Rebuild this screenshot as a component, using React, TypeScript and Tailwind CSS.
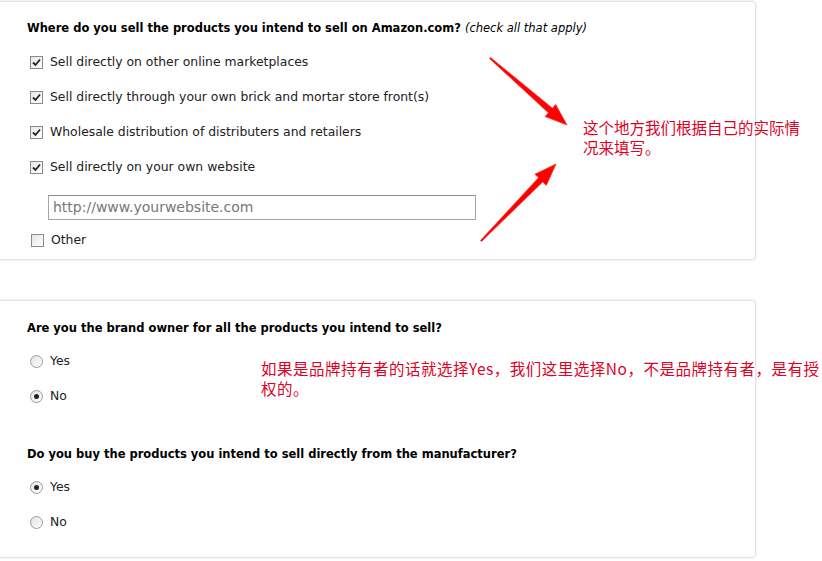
import type { ReactNode } from 'react';

// Seller questionnaire card with red hand-drawn annotations on top.

const FONT = "font-['DejaVu_Sans','Verdana',sans-serif]";

function CheckBox({ checked }: { checked: boolean }) {
  return (
    <span className="flex h-[13px] w-[13px] shrink-0 items-center justify-center border border-[#8a8a8a] bg-gradient-to-br from-[#e6e6e6] to-white">
      {checked && (
        <svg width="9" height="9" viewBox="0 0 9 9">
          <path d="M1 4.5 L3.5 7 L8 1.5" fill="none" stroke="#222" strokeWidth="1.8" />
        </svg>
      )}
    </span>
  );
}

function Radio({ checked }: { checked: boolean }) {
  return (
    <span className="flex h-[13px] w-[13px] shrink-0 items-center justify-center rounded-full border border-[#9a9a9a] bg-gradient-to-br from-[#e2e2e2] to-white">
      {checked && <span className="h-[5px] w-[5px] rounded-full bg-[#222]" />}
    </span>
  );
}

function Row({ control, children }: { control: ReactNode; children: ReactNode }) {
  return (
    <div className="flex h-[35px] items-center gap-[7px] pl-[3px] text-[12.4px] text-[#222]">
      {control}
      <span>{children}</span>
    </div>
  );
}

function Question({ children }: { children: ReactNode }) {
  return <div className="h-[16px] text-[11.5px] font-bold leading-[16px] text-black">{children}</div>;
}

export default function App() {
  return (
    <div className={`relative h-[561px] w-[822px] overflow-hidden bg-white ${FONT}`}>
      <div className="flex flex-col gap-[40px] pt-[1px]">
        {/* Box 1: sales channels */}
        <section className="-ml-[6px] flex w-[762px] flex-col rounded-[4px] border border-[#e2e2e2] pt-[18px] pb-[9px] pl-[32px] shadow-[0_0_0_1px_#f4f4f4]">
          <Question>
            Where do you sell the products you intend to sell on Amazon.com?{' '}
            <span className="font-normal italic">(check all that apply)</span>
          </Question>
          <div className="mt-[9px] flex flex-col">
            <Row control={<CheckBox checked />}>Sell directly on other online marketplaces</Row>
            <Row control={<CheckBox checked />}>Sell directly through your own brick and mortar store front(s)</Row>
            <Row control={<CheckBox checked />}>Wholesale distribution of distributers and retailers</Row>
            <Row control={<CheckBox checked />}>Sell directly on your own website</Row>
          </div>
          <div className="ml-[21px] mt-[10px] flex h-[25px] w-[428px] items-center border border-[#a5a5a5] border-t-[#8e8e8e] pl-[4px] text-[14px] text-[#777]">
            http://www.yourwebsite.com
          </div>
          <div className="mt-[10px] flex h-[20px] items-center gap-[7px] pl-[4px] text-[12.4px] text-[#222]">
            <CheckBox checked={false} />
            <span>Other</span>
          </div>
        </section>

        {/* Box 2: brand and sourcing */}
        <section className="-ml-[6px] flex w-[762px] flex-col rounded-[4px] border border-[#e2e2e2] pt-[19px] pb-[17px] pl-[32px] shadow-[0_0_0_1px_#f4f4f4]">
          <Question>Are you the brand owner for all the products you intend to sell?</Question>
          <div className="mt-[8px] flex flex-col">
            <Row control={<Radio checked={false} />}>Yes</Row>
            <Row control={<Radio checked />}>No</Row>
          </div>
          <div className="mt-[32px]">
            <Question>Do you buy the products you intend to sell directly from the manufacturer?</Question>
          </div>
          <div className="mt-[8px] flex flex-col">
            <Row control={<Radio checked />}>Yes</Row>
            <Row control={<Radio checked={false} />}>No</Row>
          </div>
        </section>
      </div>

      {/* Annotations */}
      <svg className="pointer-events-none absolute inset-0" width="822" height="561">
        <polygon
          points="489.5,58.5 548.4,112.8 545.1,116.5 567,125 555.7,104.5 552.4,108.2 490.5,57.5"
          fill="#ff0000"
          stroke="#ff3030"
          strokeWidth="0.8"
        />
        <polygon
          points="480.5,240.5 538.5,177.7 534.9,174.2 556,164 546.3,185.4 542.7,181.9 481.5,241.5"
          fill="#ff0000"
          stroke="#ff3030"
          strokeWidth="0.8"
        />
      </svg>
      <div className="absolute left-[583px] top-[117px] font-['Noto_Sans_CJK_SC',sans-serif] text-[15.5px] leading-[20px] text-[#e0001f]">
        这个地方我们根据自己的实际情
        <br />
        况来填写。
      </div>
      <div className="absolute left-[261px] top-[358px] font-['Noto_Sans_CJK_SC',sans-serif] text-[15.5px] leading-[20px] tracking-[0.5px] text-[#e0001f]">
        如果是品牌持有者的话就选择Yes，我们这里选择No，不是品牌持有者，是有授
        <br />
        权的。
      </div>
    </div>
  );
}
